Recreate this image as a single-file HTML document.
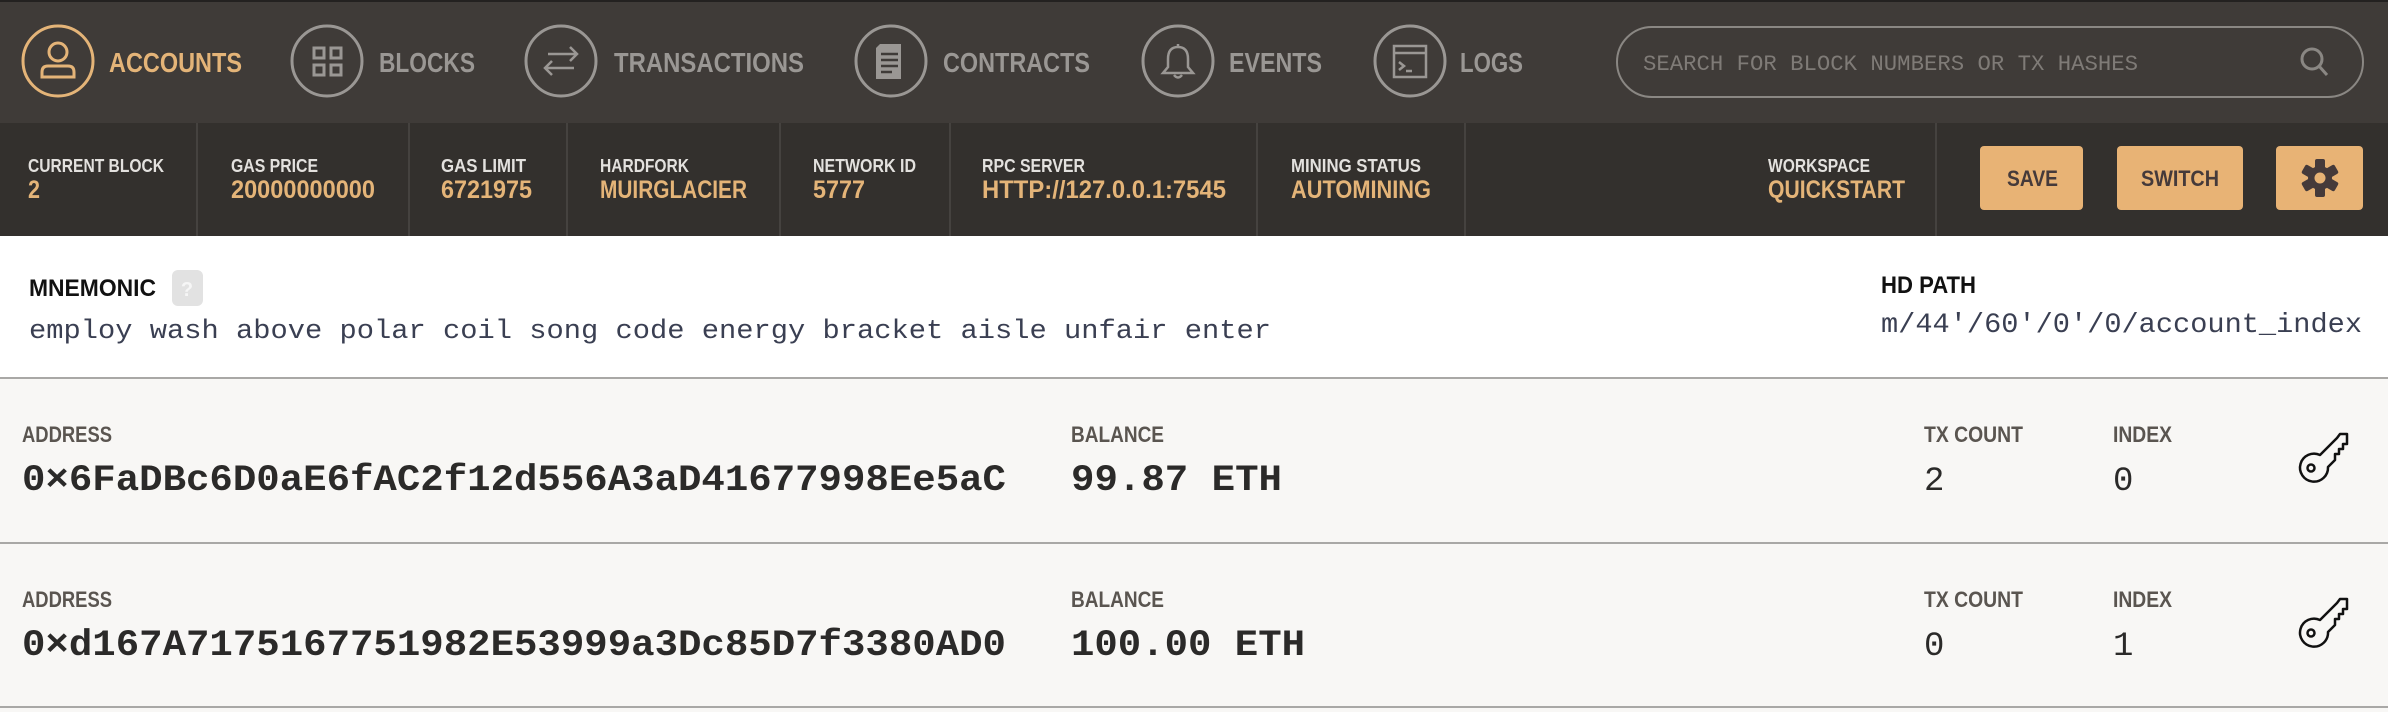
<!DOCTYPE html>
<html><head><meta charset="utf-8"><style>
html,body{margin:0;padding:0;width:2388px;height:712px;overflow:hidden;background:#f8f7f5}
svg{display:block}
</style></head><body>
<svg width="2388" height="712" viewBox="0 0 2388 712" xmlns="http://www.w3.org/2000/svg">
<rect x="0" y="0" width="2388" height="123" fill="#3f3b38"/>
<rect x="0" y="0" width="2388" height="2" fill="#232120"/>
<g fill="none" stroke-width="3">
 <circle cx="58" cy="61" r="35" stroke="#e4b478"/>
 <circle cx="327" cy="61" r="35" stroke="#9a9794"/>
 <circle cx="561" cy="61" r="35" stroke="#9a9794"/>
 <circle cx="891" cy="61" r="35" stroke="#9a9794"/>
 <circle cx="1178" cy="61" r="35" stroke="#9a9794"/>
 <circle cx="1410" cy="61" r="35" stroke="#9a9794"/>
</g>
<g fill="none" stroke="#e4b478" stroke-width="3">
 <circle cx="58" cy="52" r="9"/>
 <path d="M42 77 v-5 q0-6 6-6 h20 q6 0 6 6 v5 z"/>
</g>
<g fill="none" stroke="#9a9794" stroke-width="3">
 <rect x="314" y="48" width="10" height="10"/><rect x="331" y="48" width="10" height="10"/>
 <rect x="314" y="65" width="10" height="10"/><rect x="331" y="65" width="10" height="10"/>
</g>
<g fill="none" stroke="#9a9794" stroke-width="2.5">
 <path d="M548 54 h28 M570 47 l7 7 l-7 7"/>
 <path d="M574 68 h-28 M552 61 l-7 7 l7 7"/>
</g>
<g fill="#9a9794">
 <path d="M880 44 h21 v35 h-25 v-31 z" />
</g>
<g stroke="#3f3b38" stroke-width="2.5">
 <path d="M881 54 h17 M881 60 h17 M881 66 h17 M881 72 h11"/>
</g>
<g fill="none" stroke="#9a9794" stroke-width="2.5">
 <path d="M1178 47 q-10 0 -10 12 v8 l-5 6 h30 l-5 -6 v-8 q0 -12 -10 -12 z"/>
 <path d="M1174 75 q4 5 8 0"/>
 <path d="M1178 44 v3"/>
</g>
<g fill="none" stroke="#9a9794" stroke-width="2.5">
 <rect x="1394" y="46" width="32" height="31"/>
 <path d="M1394 53 h32 M1399 62 l5 4 l-5 4 M1406 71 h6"/>
</g>
<g font-family="Liberation Sans, sans-serif" font-weight="bold" font-size="28" fill="#9a9794">
 <text x="109" y="72" textLength="133" lengthAdjust="spacingAndGlyphs" fill="#e4b478">ACCOUNTS</text>
 <text x="379" y="72" textLength="96" lengthAdjust="spacingAndGlyphs">BLOCKS</text>
 <text x="614" y="72" textLength="190" lengthAdjust="spacingAndGlyphs">TRANSACTIONS</text>
 <text x="943" y="72" textLength="147" lengthAdjust="spacingAndGlyphs">CONTRACTS</text>
 <text x="1229" y="72" textLength="93" lengthAdjust="spacingAndGlyphs">EVENTS</text>
 <text x="1460" y="72" textLength="63" lengthAdjust="spacingAndGlyphs">LOGS</text>
</g>
<rect x="1617" y="27" width="746" height="70" rx="35" fill="none" stroke="#8a8783" stroke-width="2"/>
<text x="1643" y="70" font-family="Liberation Mono, monospace" font-size="22" fill="#7f7b77" textLength="495" lengthAdjust="spacingAndGlyphs">SEARCH FOR BLOCK NUMBERS OR TX HASHES</text>
<g fill="none" stroke="#8a8783" stroke-width="3">
 <circle cx="2312" cy="59" r="10"/><path d="M2319 66 l8 9"/>
</g>
<rect x="0" y="123" width="2388" height="113" fill="#33302d"/>
<g stroke="#45423f" stroke-width="2">
 <path d="M197 123 v113 M409 123 v113 M567 123 v113 M780 123 v113 M950 123 v113 M1257 123 v113 M1465 123 v113 M1936 123 v113"/>
</g>
<g font-family="Liberation Sans, sans-serif" font-weight="bold" font-size="18" fill="#e3e1de">
 <text x="28" y="172" textLength="136" lengthAdjust="spacingAndGlyphs">CURRENT BLOCK</text>
 <text x="231" y="172" textLength="87" lengthAdjust="spacingAndGlyphs">GAS PRICE</text>
 <text x="441" y="172" textLength="85" lengthAdjust="spacingAndGlyphs">GAS LIMIT</text>
 <text x="600" y="172" textLength="89" lengthAdjust="spacingAndGlyphs">HARDFORK</text>
 <text x="813" y="172" textLength="103" lengthAdjust="spacingAndGlyphs">NETWORK ID</text>
 <text x="982" y="172" textLength="103" lengthAdjust="spacingAndGlyphs">RPC SERVER</text>
 <text x="1291" y="172" textLength="130" lengthAdjust="spacingAndGlyphs">MINING STATUS</text>
 <text x="1768" y="172" textLength="102" lengthAdjust="spacingAndGlyphs">WORKSPACE</text>
</g>
<g font-family="Liberation Sans, sans-serif" font-weight="bold" font-size="25" fill="#e4b478">
 <text x="28" y="198" textLength="12" lengthAdjust="spacingAndGlyphs">2</text>
 <text x="231" y="198" textLength="144" lengthAdjust="spacingAndGlyphs">20000000000</text>
 <text x="441" y="198" textLength="91" lengthAdjust="spacingAndGlyphs">6721975</text>
 <text x="600" y="198" textLength="147" lengthAdjust="spacingAndGlyphs">MUIRGLACIER</text>
 <text x="813" y="198" textLength="52" lengthAdjust="spacingAndGlyphs">5777</text>
 <text x="982" y="198" textLength="244" lengthAdjust="spacingAndGlyphs">HTTP://127.0.0.1:7545</text>
 <text x="1291" y="198" textLength="140" lengthAdjust="spacingAndGlyphs">AUTOMINING</text>
 <text x="1768" y="198" textLength="137" lengthAdjust="spacingAndGlyphs">QUICKSTART</text>
</g>
<rect x="1980" y="146" width="103" height="64" rx="4" fill="#e8b375"/>
<rect x="2117" y="146" width="126" height="64" rx="4" fill="#e8b375"/>
<rect x="2276" y="146" width="87" height="64" rx="4" fill="#e8b375"/>
<g font-family="Liberation Sans, sans-serif" font-weight="bold" font-size="22" fill="#453a3a">
 <text x="2007" y="186" textLength="51" lengthAdjust="spacingAndGlyphs">SAVE</text>
 <text x="2141" y="186" textLength="78" lengthAdjust="spacingAndGlyphs">SWITCH</text>
</g>
<g transform="translate(2320,178)" fill="#453a3a">
 <circle r="12"/>
 <rect x="-5" y="-19" width="10" height="38" rx="2"/>
 <rect x="-5" y="-19" width="10" height="38" rx="2" transform="rotate(60)"/>
 <rect x="-5" y="-19" width="10" height="38" rx="2" transform="rotate(120)"/>
 <circle r="5.5" fill="#e8b375"/>
</g>
<rect x="0" y="236" width="2388" height="141" fill="#ffffff"/>
<text x="29" y="296" font-family="Liberation Sans, sans-serif" font-weight="bold" font-size="24" fill="#111" textLength="127" lengthAdjust="spacingAndGlyphs">MNEMONIC</text>
<rect x="172" y="270" width="31" height="36" rx="6" fill="#e2e2e2"/>
<text x="187" y="296" text-anchor="middle" font-family="Liberation Sans, sans-serif" font-weight="bold" font-size="20" fill="#f6f6f6">?</text>
<text x="29" y="338" font-family="Liberation Mono, monospace" font-size="27" fill="#3a3f52" textLength="1242" lengthAdjust="spacingAndGlyphs">employ wash above polar coil song code energy bracket aisle unfair enter</text>
<text x="1881" y="293" font-family="Liberation Sans, sans-serif" font-weight="bold" font-size="24" fill="#111" textLength="95" lengthAdjust="spacingAndGlyphs">HD PATH</text>
<text x="1881" y="332" font-family="Liberation Mono, monospace" font-size="28" fill="#3a3f52" textLength="481" lengthAdjust="spacingAndGlyphs">m/44'/60'/0'/0/account_index</text>
<rect x="0" y="377" width="2388" height="2" fill="#a9a8a6"/>
<rect x="0" y="542" width="2388" height="2" fill="#a9a8a6"/>
<rect x="0" y="706" width="2388" height="2" fill="#a9a8a6"/>
<g>
<g font-family="Liberation Sans, sans-serif" font-weight="bold" font-size="22" fill="#5a5550">
 <text x="22" y="442" textLength="90" lengthAdjust="spacingAndGlyphs">ADDRESS</text>
 <text x="1071" y="442" textLength="93" lengthAdjust="spacingAndGlyphs">BALANCE</text>
 <text x="1924" y="442" textLength="99" lengthAdjust="spacingAndGlyphs">TX COUNT</text>
 <text x="2113" y="442" textLength="59" lengthAdjust="spacingAndGlyphs">INDEX</text>
</g>
<g font-family="Liberation Mono, monospace" fill="#2b2a29">
 <text x="22" y="490" font-size="37" font-weight="bold" textLength="984" lengthAdjust="spacingAndGlyphs">0×6FaDBc6D0aE6fAC2f12d556A3aD41677998Ee5aC</text>
 <text x="1071" y="490" font-size="37" font-weight="bold" textLength="211" lengthAdjust="spacingAndGlyphs">99.87 ETH</text>
 <text x="1924" y="490" font-size="34">2</text>
 <text x="2113" y="490" font-size="34">0</text>
</g>
<g fill="none" stroke="#111" stroke-width="2.5" stroke-linejoin="round">
 <path d="M2320 455 L2337 438 L2340 434 L2347 434 L2347 444 L2343 444 L2343 449 L2339 449 L2339 454 L2335 454 L2335 460 L2328 467 A14 14 0 1 1 2320 455 Z"/>
 <circle cx="2311" cy="468" r="3.5"/>
</g>
</g>
<g transform="translate(0,165)">
<g font-family="Liberation Sans, sans-serif" font-weight="bold" font-size="22" fill="#5a5550">
 <text x="22" y="442" textLength="90" lengthAdjust="spacingAndGlyphs">ADDRESS</text>
 <text x="1071" y="442" textLength="93" lengthAdjust="spacingAndGlyphs">BALANCE</text>
 <text x="1924" y="442" textLength="99" lengthAdjust="spacingAndGlyphs">TX COUNT</text>
 <text x="2113" y="442" textLength="59" lengthAdjust="spacingAndGlyphs">INDEX</text>
</g>
<g font-family="Liberation Mono, monospace" fill="#2b2a29">
 <text x="22" y="490" font-size="37" font-weight="bold" textLength="984" lengthAdjust="spacingAndGlyphs">0×d167A7175167751982E53999a3Dc85D7f3380AD0</text>
 <text x="1071" y="490" font-size="37" font-weight="bold" textLength="234" lengthAdjust="spacingAndGlyphs">100.00 ETH</text>
 <text x="1924" y="490" font-size="34">0</text>
 <text x="2113" y="490" font-size="34">1</text>
</g>
<g fill="none" stroke="#111" stroke-width="2.5" stroke-linejoin="round">
 <path d="M2320 455 L2337 438 L2340 434 L2347 434 L2347 444 L2343 444 L2343 449 L2339 449 L2339 454 L2335 454 L2335 460 L2328 467 A14 14 0 1 1 2320 455 Z"/>
 <circle cx="2311" cy="468" r="3.5"/>
</g>
</g>
</svg>
</body></html>
